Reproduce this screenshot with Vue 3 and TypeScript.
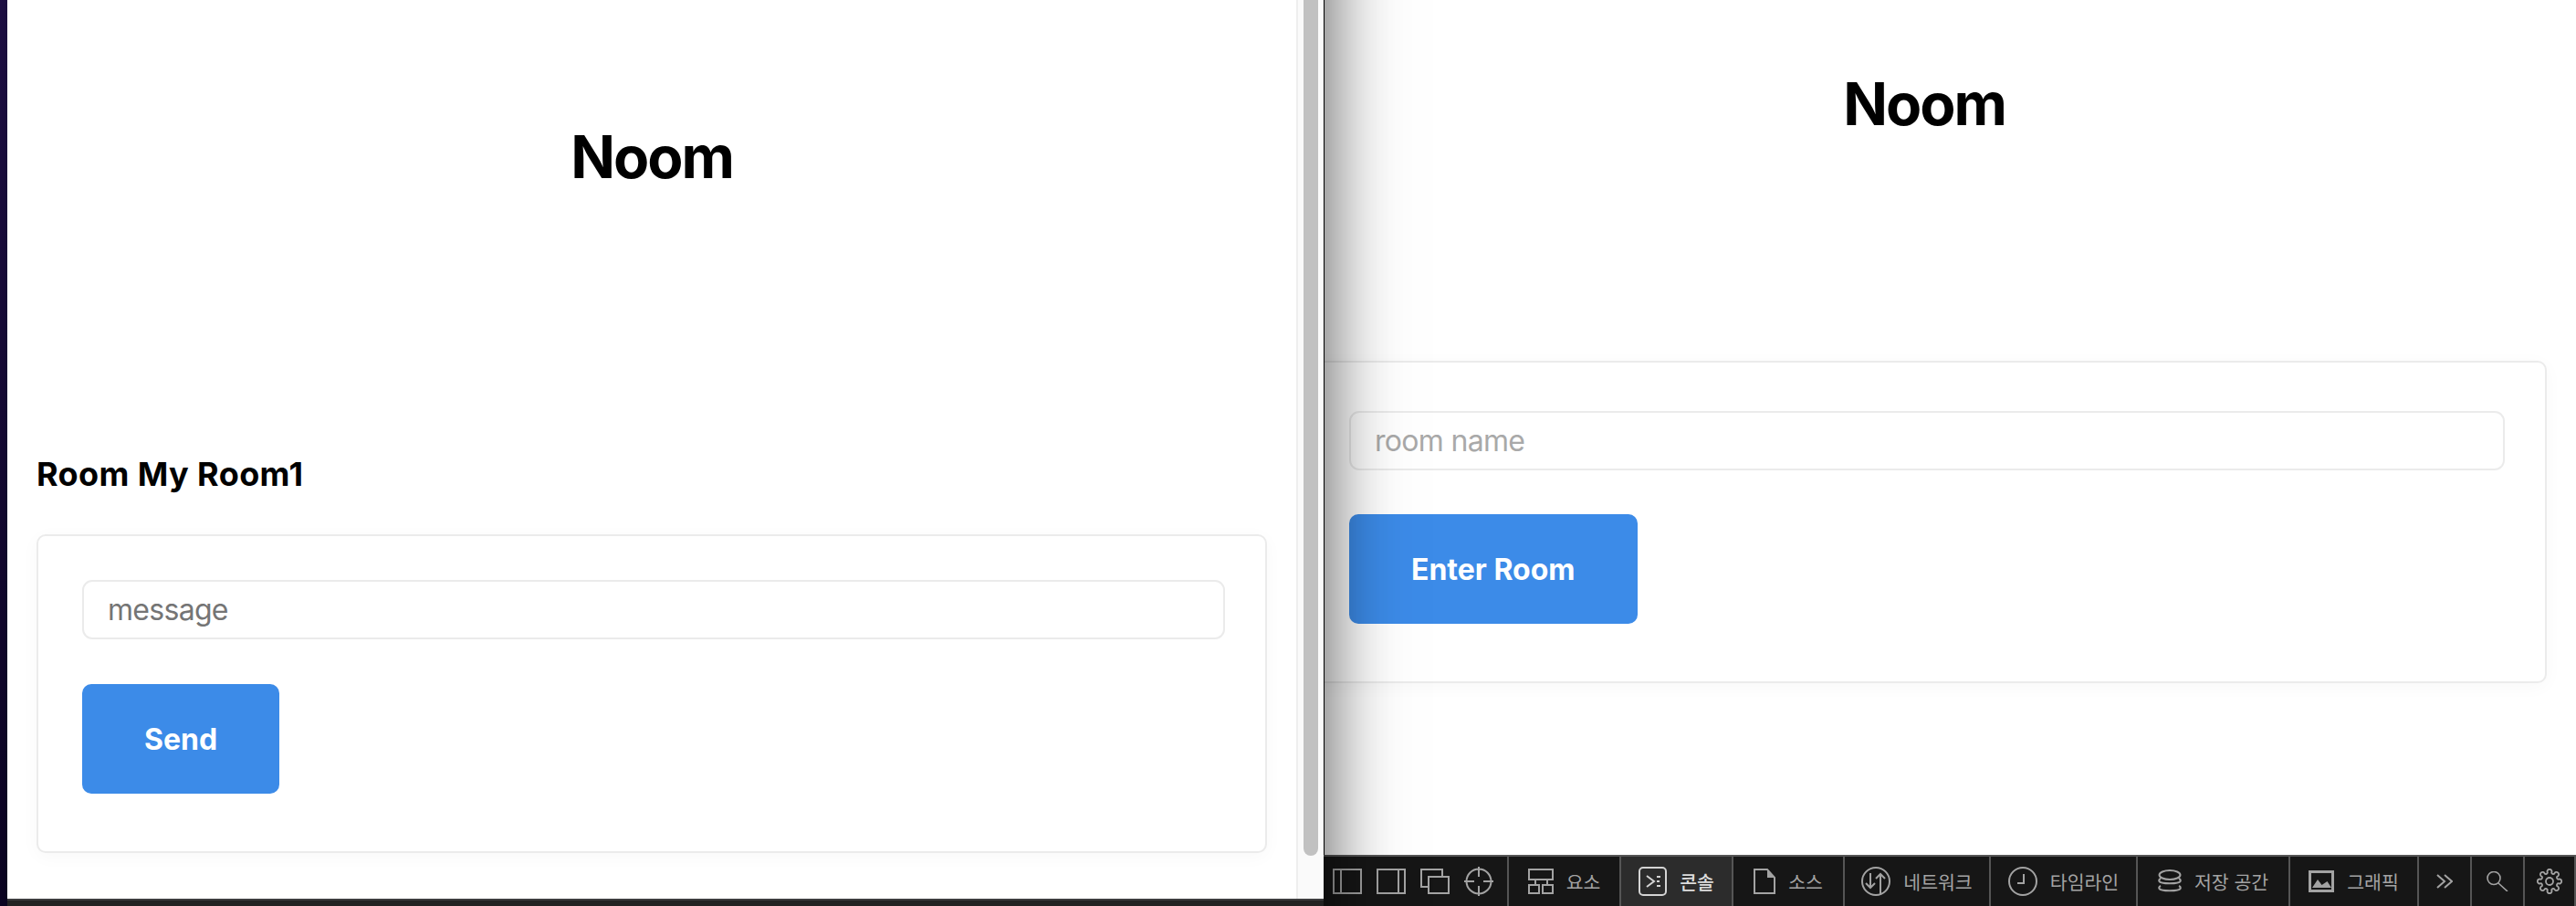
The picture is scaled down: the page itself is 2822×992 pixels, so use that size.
<template>
  <div class="desk">
    <div class="strip"></div>

    <section class="left-window">
      <div class="left-main">
        <div class="page left-page">
          <h1 class="title left-title">Noom</h1>
          <h3 class="room-name">Room My Room1</h3>
          <form class="box left-box" @submit.prevent>
            <input class="field" type="text" placeholder="message" />
            <button class="action">Send</button>
          </form>
        </div>
        <div class="scroll-track"><div class="scroll-thumb"></div></div>
      </div>
      <div class="left-bottom"></div>
    </section>

    <section class="right-window">
      <div class="right-main">
        <div class="page right-page">
          <h1 class="title right-title">Noom</h1>
          <form class="box right-box" @submit.prevent>
            <input class="field dim" type="text" placeholder="room name" />
            <button class="action">Enter Room</button>
          </form>
        </div>
      </div>

      <nav class="toolbar">
        <div class="dock">
          <svg v-for="icon in dockIcons" :key="icon.d" class="icon" :width="icon.w" :height="icon.h" :viewBox="`0 0 ${icon.w} ${icon.h}`">
            <path :d="icon.d" />
          </svg>
        </div>
        <div
          v-for="tab in tabs"
          :key="tab.id"
          class="tab"
          :class="{ active: tab.active }"
          :style="{ width: tab.width + 'px' }"
        >
          <svg class="icon" :width="tab.w" :height="tab.h" :viewBox="`0 0 ${tab.w} ${tab.h}`" :style="{ strokeWidth: tab.sw ?? 2 }">
            <path :d="tab.d" />
            <path v-if="tab.fill" class="solid" :d="tab.fill" />
          </svg>
          <span v-if="tab.label">{{ tab.label }}</span>
        </div>
      </nav>
    </section>
  </div>
</template>

<script setup lang="ts">
interface Tab {
  id: string
  label?: string
  width: number
  w: number
  h: number
  d: string
  fill?: string
  sw?: number
  active?: boolean
}

const ring = 'M1 16a15 15 0 1 0 30 0a15 15 0 1 0 -30 0'

const gearPath = () => {
  const c = 14
  const at = (deg: number, r: number) => {
    const a = (deg * Math.PI) / 180
    return `${(c + r * Math.cos(a)).toFixed(2)} ${(c + r * Math.sin(a)).toFixed(2)}`
  }
  let d = `M${at(-13, 9.8)}`
  for (let i = 0; i < 8; i++) {
    const mid = i * 45
    d += `A2.5 2.5 0 1 1 ${at(mid + 13, 9.8)}`
    d += `A2 2 0 0 0 ${at(mid + 32, 9.8)}`
  }
  return d + 'ZM10 14a4 4 0 1 0 8 0a4 4 0 1 0 -8 0'
}

const dockIcons = [
  { w: 32, h: 28, d: 'M1 1H31V27H1ZM9 1V27' },
  { w: 32, h: 28, d: 'M1 1H31V27H1ZM24 1V27' },
  { w: 32, h: 28, d: 'M24 8V1H1V20H8M9 9H31V27H9Z' },
  { w: 32, h: 32, d: 'M2.5 16a13.5 13.5 0 1 0 27 0a13.5 13.5 0 1 0 -27 0M0 16H11M21 16H32M16 0V11M16 21V32' }
]

const tabs: Tab[] = [
  { id: 'elements', label: '요소', width: 123, w: 28, h: 28, d: 'M1 1H27V12H1ZM8 12V18M21 12V18M1 18H12V27H1ZM16 18H27V27H16Z' },
  {
    id: 'console',
    label: '콘솔',
    width: 123,
    w: 31,
    h: 32,
    active: true,
    d: 'M5 1H26A4 4 0 0 1 30 5V27A4 4 0 0 1 26 31H5A4 4 0 0 1 1 27V5A4 4 0 0 1 5 1ZM9 10L17 16L9 22M20 11H24M20 16H23M20 21H24'
  },
  { id: 'sources', label: '소스', width: 122, w: 24, h: 28, d: 'M1 1H15L23 10V27H1Z', fill: 'M15 1L23 10H15Z' },
  { id: 'network', label: '네트워크', width: 160, w: 32, h: 32, d: ring + 'M10 7V23M5 18L10 23L15 18M21 30V8M16 13L21 8L26 13' },
  { id: 'timeline', label: '타임라인', width: 161, w: 32, h: 32, d: ring + 'M17 8V18H10' },
  {
    id: 'storage',
    label: '저장 공간',
    width: 167,
    w: 26,
    h: 26,
    d: 'M1.5 6a11.5 5 0 1 0 23 0a11.5 5 0 1 0 -23 0M3 10C1 11 1 12 1.5 13C3 16 23 16 24.5 13C25 12 25 11 23 10M3 18C1 19 1 20 1.5 21C3 24 23 24 24.5 21C25 20 25 19 23 18'
  },
  { id: 'graphics', label: '그래픽', width: 141, w: 28, h: 24, sw: 3, d: 'M1.5 1.5H26.5V22.5H1.5Z', fill: 'M4 19L10 10L14.5 16L20.5 12L25 19Z' },
  { id: 'more', width: 58, w: 18, h: 16, d: 'M1 1L9 8L1 15M9 1L17 8L9 15' },
  { id: 'search', width: 58, w: 24, h: 22, sw: 1.6, d: 'M1 7.5a7 7 0 1 0 14 0a7 7 0 1 0 -14 0M13 13L23 22' },
  { id: 'settings', width: 56, w: 28, h: 28, sw: 1.8, d: gearPath() }
]
</script>

<style>
html,
body {
  background: #fff;
}
</style>

<style scoped>
.desk {
  display: flex;
  width: 2822px;
  height: 992px;
  overflow: hidden;
  font-family: Inter, "Noto Sans CJK KR", sans-serif;
  color: #000;
  background: #fff;
}

.strip {
  width: 8px;
  flex: none;
  background: linear-gradient(#2a1560, #0f0530);
}

.left-window {
  position: relative;
  z-index: 2;
  width: 1442px;
  flex: none;
  display: flex;
  flex-direction: column;
  background: #fff;
}

/* window shadow falling on the window behind, runs past the top and bottom so it doesn't fade there */
.left-window::after {
  content: "";
  position: absolute;
  top: -120px;
  bottom: -120px;
  left: 0;
  right: 0;
  z-index: -1;
  box-shadow: 0 0 80px rgba(0, 0, 0, 0.7);
}

.left-main {
  flex: 1;
  display: flex;
  min-height: 0;
  background: #fff;
}

.left-bottom {
  height: 6px;
  flex: none;
  background: #222;
  border-top: 2px solid #3c3c3e;
}

.page {
  flex: 1;
  min-width: 0;
}

.left-page {
  padding: 133px 32px 0 32px;
}

.title {
  margin: 0;
  font-size: 64px;
  font-weight: 700;
  letter-spacing: -2px;
  text-align: center;
}

.room-name {
  margin: 287px 0 44px;
  font-size: 36px;
  font-weight: 700;
  letter-spacing: 0.4px;
}

.box {
  display: flex;
  flex-direction: column;
  align-items: flex-start;
  box-sizing: border-box;
  background: #fff;
  border: 2px solid #ebebeb;
  border-radius: 10px;
  box-shadow: 0 4px 20px rgba(0, 0, 0, 0.03);
}

.left-box {
  padding: 48px 44px 63px 48px;
}

.left-box .field {
  margin-bottom: 49px;
}

.right-box {
  margin: 0 32px;
  padding: 53px 44px 63px 45px;
}

.field {
  box-sizing: border-box;
  width: 100%;
  height: 65px;
  padding: 0 26px;
  margin-bottom: 48px;
  font: 400 32px Inter, sans-serif;
  letter-spacing: -0.7px;
  background: #fff;
  border: 2px solid #ebebeb;
  border-radius: 11px;
  outline: none;
}

.field::placeholder {
  color: #757575;
  opacity: 1;
}

.field.dim::placeholder {
  color: #a9a9a9;
}

.action {
  height: 120px;
  padding: 0 68px;
  font: 700 32px Inter, sans-serif;
  color: #fff;
  background: #3c8be8;
  border: none;
  border-radius: 10px;
}

.scroll-track {
  width: 30px;
  flex: none;
  box-sizing: border-box;
  padding: 0 6px;
  background: #fafafa;
  border-left: 2px solid #eee;
}

.scroll-thumb {
  height: 937px;
  background: #c1c1c1;
  border-radius: 0 0 8px 8px;
}

.right-window {
  flex: 1;
  min-width: 0;
  display: flex;
  flex-direction: column;
}

.right-main {
  flex: 1;
  min-height: 0;
  overflow: hidden;
  background: #fff;
  border-left: 1px solid #000;
}

.right-page {
  width: 1423px;
  margin-left: -52px;
  padding-top: 75px;
}

.right-title {
  padding-right: 5px;
  margin-bottom: 243px;
}

.toolbar {
  height: 56px;
  flex: none;
  display: flex;
  box-sizing: border-box;
  background: #161616;
  border-top: 2px solid #555;
}

.dock {
  width: 203px;
  flex: none;
  box-sizing: border-box;
  display: flex;
  align-items: center;
  gap: 16px;
  padding-left: 10px;
  border-right: 2px solid #555;
}

.tab {
  flex: none;
  box-sizing: border-box;
  display: flex;
  align-items: center;
  justify-content: center;
  gap: 14px;
  font-size: 20.5px;
  color: #a3a3a3;
  white-space: nowrap;
  border-right: 2px solid #555;
}

.tab.active {
  color: #ddd;
  font-weight: 500;
  background: #2c2c2c;
}

.icon {
  flex: none;
  fill: none;
  stroke: #a3a3a3;
  stroke-width: 2;
}

.tab.active .icon {
  stroke: #d4d4d4;
}

.solid {
  fill: #a3a3a3;
  stroke: none;
}
</style>
